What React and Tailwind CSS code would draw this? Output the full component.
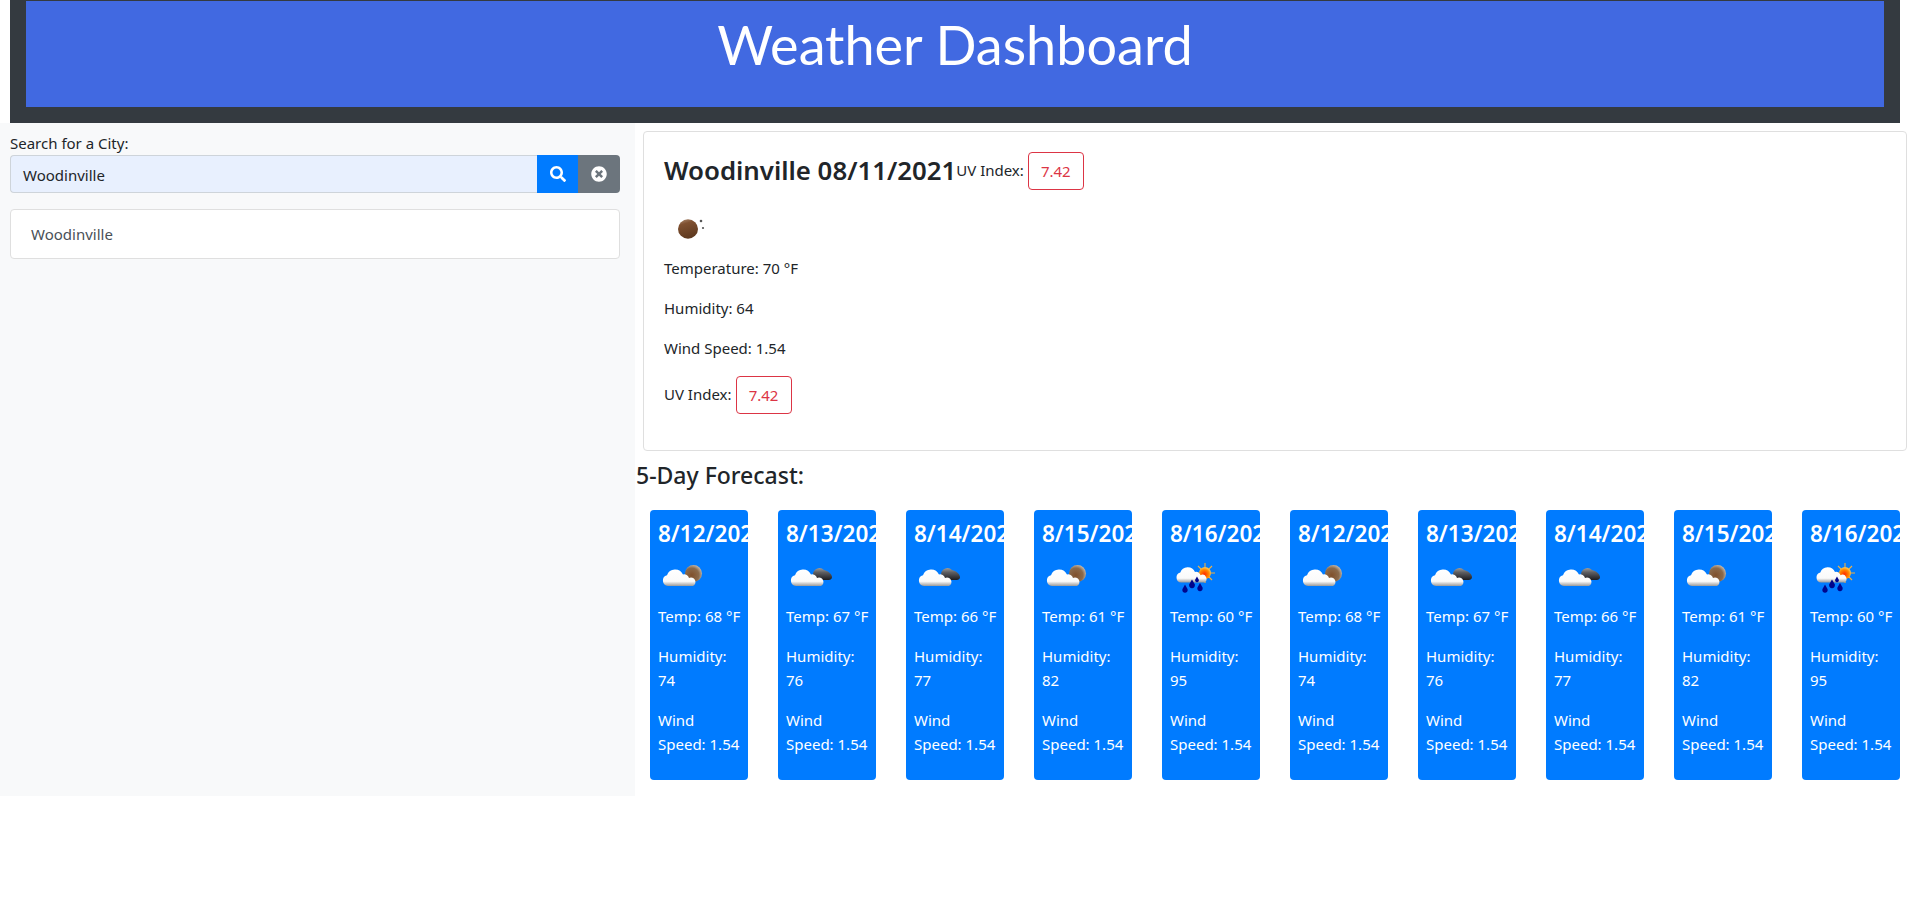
import React from "react";

const body = { fontFamily: '"Noto Sans", "Open Sans", sans-serif' };

function Defs() {
  return (
    <svg width="0" height="0" className="absolute">
      <defs>
        <linearGradient id="cloudG" x1="0" y1="0" x2="0" y2="1">
          <stop offset="0" stopColor="#ffffff" />
          <stop offset="0.72" stopColor="#fafafa" />
          <stop offset="1" stopColor="#9a9a9a" />
        </linearGradient>
        <radialGradient id="brownG" cx="0.4" cy="0.6" r="0.62">
          <stop offset="0" stopColor="#80502c" />
          <stop offset="0.68" stopColor="#8a6a4c" />
          <stop offset="1" stopColor="#c2b4a4" />
        </radialGradient>
        <linearGradient id="darkG" x1="0" y1="0" x2="0" y2="1">
          <stop offset="0" stopColor="#9a9a9a" />
          <stop offset="0.35" stopColor="#5f5f62" />
          <stop offset="1" stopColor="#1c1c20" />
        </linearGradient>
        <radialGradient id="sunG" cx="0.45" cy="0.6" r="0.55">
          <stop offset="0" stopColor="#ff2a00" />
          <stop offset="0.7" stopColor="#ff8a00" />
          <stop offset="1" stopColor="#ffc34d" />
        </radialGradient>
        <linearGradient id="ballG" x1="0" y1="0" x2="0.3" y2="1">
          <stop offset="0" stopColor="#b09078" />
          <stop offset="0.3" stopColor="#7f5030" />
          <stop offset="1" stopColor="#5f3a20" />
        </linearGradient>
      </defs>
    </svg>
  );
}

const cloud = "M10 31A5.500 5.500 0 0 1 9 20.200A8.600 8.600 0 0 1 25 19.500A5 5 0 0 1 31 23A4.200 4.200 0 0 1 35 31Z";

function Icon({ kind }) {
  return (
    <svg viewBox="0 0 50 50" className="w-[50px] h-[50px] block -mb-px">
      {kind === "brown" && <circle cx="35.500" cy="18.500" r="8.500" fill="url(#brownG)" />}
      {kind === "dark" && (
        <path d="M27 20A6.500 6.500 0 0 1 38 15C42 16 46 19 46 22C46 24.500 44 25 41 25H30Z" fill="url(#darkG)" />
      )}
      {kind === "rain" && (
        <>
          <g stroke="#f0b040" strokeWidth="1.100">
            <path d="M35 8v4M35 24v4M25 18h4M41 18h4M28 11l3 3M42 11l-3 3M42 25l-3-3" />
          </g>
          <circle cx="35" cy="18" r="6" fill="url(#sunG)" />
        </>
      )}
      <path d={cloud} fill="url(#cloudG)" transform={kind === "rain" ? "translate(2 -1) scale(.92)" : ""} />
      {kind === "rain" && (
        <g fill="#00058c">
          <path d="M15 29.500l2.500 4.500a2.700 2.700 0 1 1-5 0z" />
          <path d="M22 24.500l2.700 4.800a2.900 2.900 0 1 1-5.400 0z" />
          <path d="M30 28l2.500 4.500a2.700 2.700 0 1 1-5 0z" />
          <path d="M27 21.500l1.700 3a1.900 1.900 0 1 1-3.400 0z" />
        </g>
      )}
    </svg>
  );
}

function NightIcon() {
  return (
    <svg viewBox="0 0 50 50" className="w-[50px] h-[50px] block">
      <ellipse cx="24" cy="23" rx="10" ry="9.700" fill="url(#ballG)" />
      <circle cx="37" cy="15" r="1.300" fill="#555" />
      <circle cx="39" cy="22" r="1.100" fill="#555" />
    </svg>
  );
}

const days = [
  ["8/12/2021", "brown", 68, 74],
  ["8/13/2021", "dark", 67, 76],
  ["8/14/2021", "dark", 66, 77],
  ["8/15/2021", "brown", 61, 82],
  ["8/16/2021", "rain", 60, 95],
  ["8/12/2021", "brown", 68, 74],
  ["8/13/2021", "dark", 67, 76],
  ["8/14/2021", "dark", 66, 77],
  ["8/15/2021", "brown", 61, 82],
  ["8/16/2021", "rain", 60, 95],
];

function UvBadge() {
  return (
    <span className="inline-flex items-center justify-center w-[56px] h-[38px] border border-[#dc3545] rounded text-[#dc3545] text-[15px]">
      7.42
    </span>
  );
}

export default function App() {
  return (
    <div className="w-[1907px] bg-white text-[#212529] text-[15px] leading-6" style={body}>
      <header className="ml-[10px] mr-[7px] h-[123px] bg-[#343a40] pt-px px-4">
        <div className="h-[106px] bg-[#4169e1] flex justify-center text-white">
          <h1 className="text-[54px] leading-[64px] pt-3 font-normal" style={{ fontFamily: 'Lato, sans-serif' }}>Weather Dashboard</h1>
        </div>
      </header>
      <div className="flex">
        <aside className="w-[635px] bg-[#f8f9fa] pl-[10px] pr-[15px] pt-2">
          <label className="block leading-6 h-6">Search for a City:</label>
          <div className="flex h-[38px]">
            <div className="flex-1 flex items-center bg-[#e8f0fe] border border-[#ced4da] border-r-0 rounded-l pl-3 pt-px text-[#212529]">Woodinville</div>
            <button className="w-[41px] bg-[#007bff] flex items-center justify-center">
              <svg viewBox="0 0 512 512" className="w-4 h-4" fill="#fff"><path d="M505 442.700L405.300 343c-4.500-4.500-10.600-7-17-7H372c27.600-35.300 44-79.700 44-128C416 93.100 322.900 0 208 0S0 93.100 0 208s93.100 208 208 208c48.300 0 92.700-16.400 128-44v16.300c0 6.400 2.500 12.500 7 17l99.700 99.700c9.400 9.400 24.600 9.400 33.900 0l28.300-28.300c9.400-9.400 9.400-24.600.1-34zM208 336c-70.700 0-128-57.200-128-128 0-70.700 57.200-128 128-128 70.700 0 128 57.200 128 128 0 70.700-57.200 128-128 128z"/></svg>
            </button>
            <button className="w-[42px] bg-[#6c757d] rounded-r flex items-center justify-center">
              <svg viewBox="0 0 512 512" className="w-4 h-4" fill="#fff"><path d="M256 8C119 8 8 119 8 256s111 248 248 248 248-111 248-248S393 8 256 8zm121.600 313.100c4.700 4.700 4.700 12.300 0 17L338 377.600c-4.700 4.700-12.300 4.700-17 0L256 312l-65.100 65.600c-4.700 4.700-12.300 4.700-17 0L134.400 338c-4.700-4.700-4.700-12.300 0-17l65.600-65-65.600-65.100c-4.700-4.700-4.700-12.300 0-17l39.600-39.600c4.700-4.700 12.300-4.700 17 0l65 65.700 65.100-65.600c4.700-4.700 12.300-4.700 17 0l39.600 39.600c4.700 4.700 4.700 12.300 0 17L312 256l65.600 65.100z"/></svg>
            </button>
          </div>
          <div className="mt-4 h-[50px] bg-white border border-[#dfdfdf] rounded flex items-center pl-5 text-[#495057]">Woodinville</div>
        </aside>
        <main className="flex-1 min-w-0 overflow-hidden">
          <section className="ml-2 mt-2 h-[320px] border border-[#dfdfdf] rounded px-5 pt-5">
            <div className="flex items-center h-[38px]">
              <h3 className="text-[25.8px] leading-[34px] font-semibold mb-[3px]">Woodinville 08/11/2021</h3>
              <span className="mr-[4px] mb-[2px]">UV Index:</span>
              <UvBadge />
            </div>
            <div className="mt-4 h-[50px]"><NightIcon /></div>
            <p>Temperature: 70 °F</p>
            <p className="mt-4">Humidity: 64</p>
            <p className="mt-4">Wind Speed: 1.54</p>
            <div className="mt-4 flex items-center h-[38px]">
              <span className="mr-[4px] mb-[2px]">UV Index:</span>
              <UvBadge />
            </div>
          </section>
          <h4 className="text-[23px] leading-[29px] font-medium pt-2.5 pl-px h-[59px]">5-Day Forecast:</h4>
          <div className="flex gap-[30px] pl-[15px]">
            {days.map(([d, k, t, h], i) => (
              <div key={i} className="w-[98px] h-[270px] shrink-0 bg-[#007bff] rounded text-white p-2 overflow-hidden">
                <h4 className="text-[22.5px] leading-[29px] font-semibold pt-px mb-[7px] whitespace-nowrap">{d}</h4>
                <Icon kind={k} />
                <p className="whitespace-nowrap">Temp: {t} °F</p>
                <p className="mt-4">Humidity: {h}</p>
                <p className="mt-4">Wind Speed: 1.54</p>
              </div>
            ))}
          </div>
          <div className="h-4" />
        </main>
      </div>
      <Defs />
    </div>
  );
}
